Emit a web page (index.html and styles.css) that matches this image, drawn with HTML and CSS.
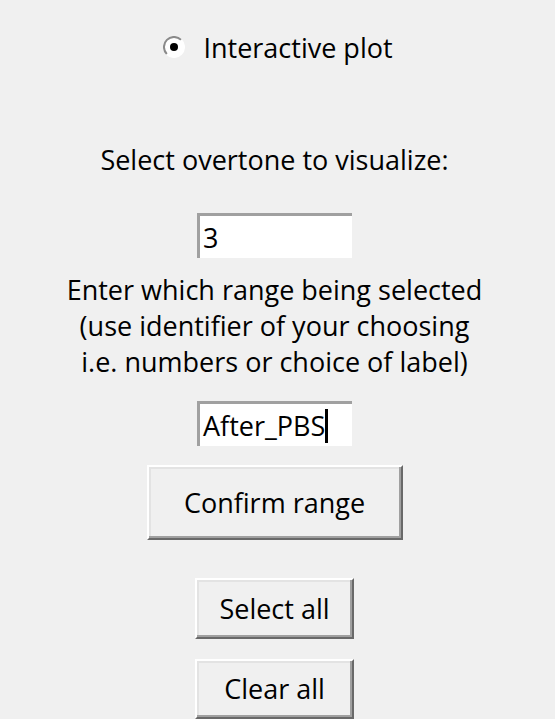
FILE: index.html
```html
<!DOCTYPE html>
<html lang="en">
<head>
    <meta charset="UTF-8">
    <title>Overtone selection</title>
    <link rel="stylesheet" href="styles.css">
</head>
<body>
    <div class="panel">
        <label class="radio-row">
            <svg class="radio" width="22" height="22" viewBox="0 0 22 22">
                <circle cx="11" cy="11" r="10" fill="#fff"/>
                <path d="M3.9 18.1 A10 10 0 0 1 18.1 3.9" fill="none" stroke="#8a8a8a" stroke-width="2"/>
                <path d="M18.1 3.9 A10 10 0 0 1 3.9 18.1" fill="none" stroke="#fff" stroke-width="2"/>
                <circle cx="11" cy="11" r="4" fill="#000"/>
            </svg>
            <span>Interactive plot</span>
        </label>

        <p class="caption">Select overtone to visualize:</p>
        <div class="entry">3</div>

        <p class="note">Enter which range being selected<br>(use identifier of your choosing<br>i.e. numbers or choice of label)</p>
        <div class="entry">After_PBS<span class="caret"></span></div>

        <button class="btn btn-wide">Confirm range</button>
        <button class="btn btn-small">Select all</button>
        <button class="btn btn-small">Clear all</button>
    </div>
</body>
</html>
```

FILE: styles.css
```css
body {
    margin: 0;
    background-color: #f0f0f0;
    font-family: "Open Sans", "Noto Sans", sans-serif;
    font-size: 27px;
    color: #000;
}
.panel {
    display: flex;
    flex-direction: column;
    align-items: center;
    padding-top: 31px;
    padding-right: 6px;
    height: 719px;
    box-sizing: border-box;
    overflow: hidden;
}
.radio-row {
    display: flex;
    align-items: center;
    gap: 18px;
    height: 32px;
    margin-left: 7px;
}
.radio {
    display: block;
}
.caption {
    margin: 80px 0 0;
    line-height: 34px;
}
.entry {
    width: 155px;
    height: 46px;
    box-sizing: border-box;
    background-color: #fff;
    border-top: 3px solid #a0a0a0;
    border-left: 3px solid #a0a0a0;
    padding: 3px 0 0 3px;
    line-height: 38px;
    margin-top: 36px;
    display: flex;
    align-items: flex-start;
}
.caret {
    display: inline-block;
    width: 3px;
    height: 34px;
    margin-top: 2px;
    background-color: #000;
}
.note {
    margin: 14px 0 0;
    text-align: center;
    line-height: 36px;
}
.note + .entry {
    margin-top: 21px;
}
.btn {
    font-family: inherit;
    font-size: 27px;
    color: #000;
    background-color: #f0f0f0;
    border: 2px solid;
    border-color: #fff #696969 #696969 #fff;
    box-shadow: inset -2px -2px 0 #a0a0a0, inset 2px 2px 0 #e3e3e3;
    padding: 0;
}
.btn-wide {
    width: 256px;
    height: 78px;
    margin-top: 19px;
}
.btn-small {
    width: 159px;
    height: 62px;
    margin-top: 38px;
}
.btn-small + .btn-small {
    margin-top: 20px;
}
```
